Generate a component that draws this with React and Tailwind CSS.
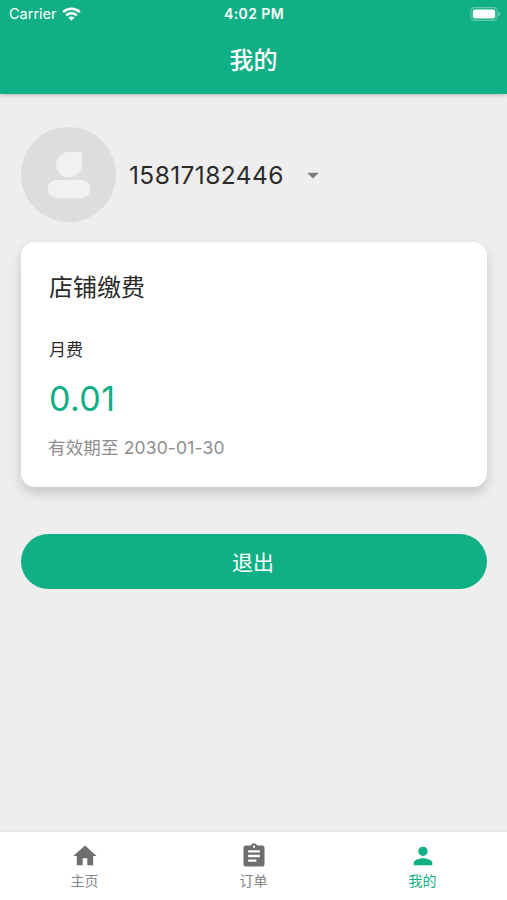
import React, { useState } from 'react';
import { MdHome, MdAssignment, MdPerson, MdArrowDropDown } from 'react-icons/md';

const tabs = [
    { id: 'home', label: '主页', Icon: MdHome },
    { id: 'orders', label: '订单', Icon: MdAssignment },
    { id: 'mine', label: '我的', Icon: MdPerson },
];

const WifiIcon = () => (
    <svg width="19" height="14" viewBox="0 0 20 14" fill="none" stroke="currentColor" strokeWidth="2.7">
        <path d="M1.2 5C6.2 0.2 13.8 0.2 18.8 5" />
        <path d="M4.4 8.5C7.6 5.5 12.4 5.5 15.6 8.5" />
        <path d="M10 14L6.7 10.8C8.5 9.2 11.5 9.2 13.3 10.8Z" fill="currentColor" stroke="none" />
    </svg>
);

const BatteryIcon = () => (
    <svg width="31" height="14" viewBox="0 0 31 14">
        <rect x="0.8" y="0.6" width="26.4" height="12.8" rx="3.8" fill="none" stroke="#fff" strokeOpacity="0.35" strokeWidth="1.1" />
        <rect x="2.8" y="2.5" width="22.4" height="9" rx="2.1" fill="#fff" />
        <path d="M28.6 4.8C30.6 5.5 30.6 8.5 28.6 9.2Z" fill="#fff" fillOpacity="0.45" />
    </svg>
);

const Avatar = () => (
    <svg width="95" height="95" viewBox="0 0 95 95" className="shrink-0">
        <circle cx="47.5" cy="47.5" r="47.5" fill="#dddddd" />
        <path d="M48 25H61V37A13 13 0 0 1 35 38A13 13 0 0 1 48 25Z" fill="#f1f1f1" />
        <rect x="26.5" y="53" width="43" height="18" rx="9" fill="#f1f1f1" />
    </svg>
);

const App = () => {
    const [ativo, setAtivo] = useState('mine');

    return (
        <div className="flex flex-col h-screen bg-[#eeeeee] font-['Inter','Noto_Sans_CJK_SC',sans-serif]">
            <header className="relative h-[94px] shrink-0 bg-[#11af85] text-white shadow-[0_1px_4px_rgba(0,0,0,0.25)]">
                <div className="grid grid-cols-3 items-center h-[27px] pl-[7px] pr-[6px]">
                    <div className="flex items-center gap-[5px] pl-0.5">
                        <span className="text-[14.5px]">Carrier</span>
                        <WifiIcon />
                    </div>
                    <span className="text-center text-[14px] font-semibold tracking-[0.4px]">4:02 PM</span>
                    <div className="flex justify-end">
                        <BatteryIcon />
                    </div>
                </div>
                <h1 className="h-[67px] leading-[67px] text-center text-[24px] font-medium">我的</h1>
            </header>

            <main className="flex-1 px-[21px] pr-5 pt-[33px]">
                <div className="flex items-center">
                    <Avatar />
                    <button className="flex items-center ml-[13px]">
                        <span className="pt-px text-[24.5px] tracking-[0.4px] text-[#2b2b2b]">15817182446</span>
                        <MdArrowDropDown size={28} className="ml-[15px] text-[#7b7b7b]" />
                    </button>
                </div>

                <section className="mt-5 h-[245px] px-7 pt-[26px] rounded-[14px] bg-white shadow-[0_6px_12px_rgba(0,0,0,0.17)]">
                    <h2 className="h-10 leading-10 text-[24px] text-[#2b2b2b]">店铺缴费</h2>
                    <p className="mt-[29px] h-[26px] leading-[26px] text-[17px] text-[#2b2b2b]">月费</p>
                    <p className="mt-[14px] h-11 leading-11 text-[34px] tracking-[0.4px] text-[#11af85]">0.01</p>
                    <p className="-ml-px mt-[14px] h-[26px] leading-[26px] text-[17.5px] tracking-[0.15px] text-[#8e8e8e]">有效期至 2030-01-30</p>
                </section>

                <button className="block w-full h-[55px] mt-[47px] pt-0.5 pr-0.5 rounded-full bg-[#11af85] text-[21px] text-white">
                    退出
                </button>
            </main>

            <nav className="grid grid-cols-3 h-[69px] shrink-0 border-t border-[#e6e6e6] bg-white shadow-[0_-1px_1px_rgba(0,0,0,0.03)]">
                {tabs.map(({ id, label, Icon }) => (
                    <button
                        key={id}
                        onClick={() => setAtivo(id)}
                        className={`flex flex-col items-center pt-[10px] ${ativo === id ? 'text-[#11af85]' : 'text-[#6e6e6e]'}`}
                    >
                        <Icon size={28} />
                        <span className={`text-[14px] leading-[22px] ${ativo === id ? '' : 'text-[#858585]'}`}>{label}</span>
                    </button>
                ))}
            </nav>
        </div>
    );
};

export default App;
